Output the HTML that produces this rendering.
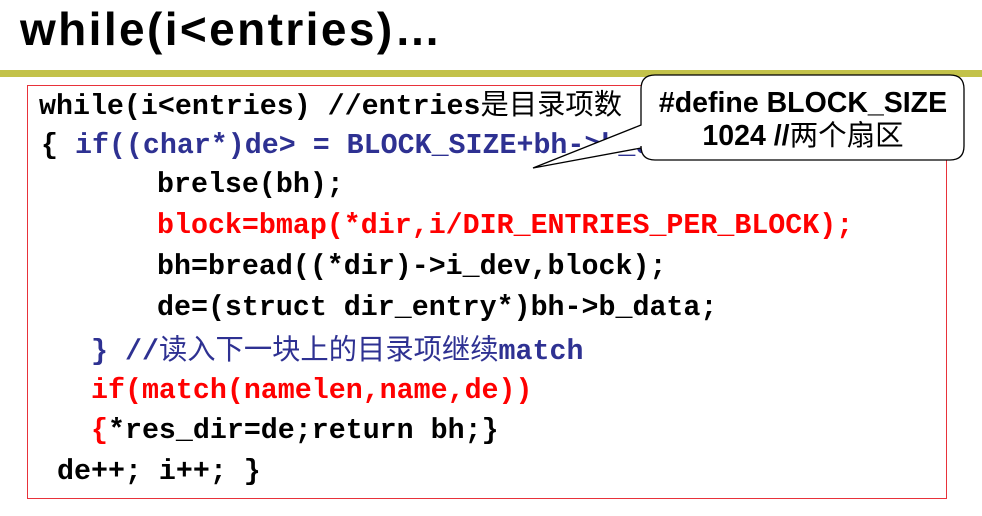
<!DOCTYPE html>
<html><head><meta charset="utf-8"><style>
body{margin:0;width:982px;height:516px;background:#fff;position:relative;overflow:hidden}
.t{position:absolute;left:20px;top:2px;font:bold 46px "Liberation Sans",sans-serif;color:#000;letter-spacing:2.4px}
.bar{position:absolute;left:0;top:70px;width:982px;height:7px;background:#c3c24a}
.box{position:absolute;left:27px;top:85px;width:918px;height:412px;border:1.5px solid #e8323a}
.l{position:absolute;font:bold 28.3px/30px "Liberation Mono",monospace;white-space:pre;height:30px}
.k{color:#000}.b{color:#2e3192}.r{color:#ff0000}
.cn{font-family:"Noto Sans CJK SC",sans-serif;font-weight:normal;line-height:30px}
.co{position:absolute;left:0;top:0}
.ct{position:absolute;left:641px;top:87px;width:324px;text-align:center;font:bold 28.5px/33px "Liberation Sans","Noto Sans CJK SC",sans-serif;color:#000}
</style></head><body>
<div class="t">while(i&lt;entries)…</div>
<div class="bar"></div>
<div class="box"></div>
<div class="l k" style="left:39px;top:88px">while(i&lt;entries) //entries<span class="cn">是目录项数</span></div>
<div class="l b" style="left:41px;top:131px"><span class="k">{</span> if((char*)de&gt; = BLOCK_SIZE+bh-&gt;b_data)</div>
<div class="l k" style="left:157px;top:170px">brelse(bh);</div>
<div class="l r" style="left:157px;top:211px">block=bmap(*dir,i/DIR_ENTRIES_PER_BLOCK);</div>
<div class="l k" style="left:157px;top:252px">bh=bread((*dir)-&gt;i_dev,block);</div>
<div class="l k" style="left:157px;top:293px">de=(struct dir_entry*)bh-&gt;b_data;</div>
<div class="l b" style="left:91px;top:333px">} //<span class="cn">读入下一块上的目录项继续</span>match</div>
<div class="l r" style="left:91px;top:376px">if(match(namelen,name,de))</div>
<div class="l r" style="left:91px;top:416px">{<span class="k">*res_dir=de;return bh;}</span></div>
<div class="l k" style="left:57px;top:457px">de++; i++; }</div>
<svg class="co" width="982" height="516"><path d="M655,75 H950 Q964,75 964,89 V146 Q964,160 950,160 H655 Q641,160 641,146 V148 L533,168 L641,125 V89 Q641,75 655,75 Z" fill="#fff" stroke="#000" stroke-width="1.3"/></svg>
<div class="ct">#define BLOCK_SIZE<br>1024 //<span style="font-weight:normal">两个扇区</span></div>
</body></html>
